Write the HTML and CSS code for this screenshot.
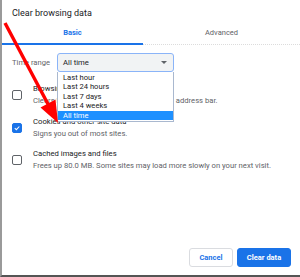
FILE: index.html
```html
<!DOCTYPE html>
<html>
<head>
<meta charset="utf-8">
<link rel="stylesheet" href="styles.css">
</head>
<body>
<div class="dialog">
  <div class="title">Clear browsing data</div>
  <div class="tabs">
    <div class="tab tab-active">Basic</div>
    <div class="tab">Advanced</div>
  </div>
  <div class="content">
    <div class="range-row">
      <span class="range-label">Time range</span>
      <div class="select">
        <span>All time</span>
        <span class="caret"></span>
      </div>
    </div>
    <div class="option">
      <span class="checkbox"></span>
      <div class="option-text">
        <div class="option-title">Browsing history</div>
        <div class="option-sub">Clears history and autocompletions in the address bar.</div>
      </div>
    </div>
    <div class="option">
      <span class="checkbox checked">
        <svg viewBox="0 0 10 10" width="10" height="10"><path d="M2.2 5.2 L4.2 7.1 L7.9 3.1" fill="none" stroke="#fff" stroke-width="1.3"/></svg>
      </span>
      <div class="option-text">
        <div class="option-title">Cookies and other site data</div>
        <div class="option-sub">Signs you out of most sites.</div>
      </div>
    </div>
    <div class="option">
      <span class="checkbox"></span>
      <div class="option-text">
        <div class="option-title">Cached images and files</div>
        <div class="option-sub">Frees up 80.0 MB. Some sites may load more slowly on your next visit.</div>
      </div>
    </div>
  </div>
  <div class="footer">
    <button class="btn btn-cancel">Cancel</button>
    <button class="btn btn-primary">Clear data</button>
  </div>

  <ul class="dropdown">
    <li>Last hour</li>
    <li>Last 24 hours</li>
    <li>Last 7 days</li>
    <li>Last 4 weeks</li>
    <li class="selected">All time</li>
  </ul>

  <svg class="arrow" width="300" height="277" viewBox="0 0 300 277">
    <line x1="5" y1="23" x2="49" y2="106" stroke="#f00" stroke-width="3.4"/>
    <polygon points="58,123 55.5,99.5 40.5,107.5" fill="#f00"/>
  </svg>
</div>
</body>
</html>
```

FILE: styles.css
```css
* { box-sizing: border-box; }
html, body { margin: 0; padding: 0; background: #fff; }
body {
  font-family: Roboto, "Liberation Sans", sans-serif;
  color: #202124;
}
.dialog {
  position: relative;
  width: 300px;
  height: 277px;
  border-left: 2px solid #9a9a9a;
  border-bottom: 2px solid #555;
  display: flex;
  flex-direction: column;
  overflow: hidden;
}
.title {
  font-size: 9px;
  line-height: 11px;
  padding: 8px 0 0 10px;
  height: 22px;
}
.tabs {
  display: flex;
  height: 23px;
}
.tab {
  font-size: 7.5px;
  line-height: 10px;
  text-align: center;
  color: #5f6368;
  padding-top: 6px;
  flex: 1;
  border-bottom: 1px dotted #dcdcdc;
  height: 23px;
}
.tab-active {
  flex: 0 0 141px;
  color: #1a73e8;
  font-weight: bold;
  border-bottom: 2px solid #1a73e8;
}
.content {
  padding: 8px 0 0 10px;
}
.range-row {
  display: flex;
  align-items: center;
  height: 19px;
}
.range-label {
  font-size: 7.6px;
  color: #5f6368;
  width: 45px;
}
.select {
  width: 117px;
  height: 19px;
  background: #f1f3f4;
  border: 1px solid #8ab4f8;
  border-radius: 3px;
  display: flex;
  align-items: center;
  justify-content: space-between;
  padding: 0 6px 0 5px;
  font-size: 7.7px;
  color: #202124;
}
.caret {
  width: 0;
  height: 0;
  border-left: 3px solid transparent;
  border-right: 3px solid transparent;
  border-top: 3px solid #5f6368;
}
.option {
  display: flex;
  align-items: center;
  margin-top: 11px;
  height: 24px;
}
.option + .option { margin-top: 8.5px; }
.checkbox {
  width: 10px;
  height: 10px;
  border: 1.6px solid #5f6368;
  border-radius: 2px;
  margin-right: 11px;
  flex: none;
  display: flex;
  align-items: center;
  justify-content: center;
}
.checkbox.checked {
  background: #1a73e8;
  border-color: #1a73e8;
}
.checkbox svg { display: block; }
.option-text { white-space: nowrap; }
.option-title {
  font-size: 7.7px;
  line-height: 12px;
  color: #202124;
}
.option-sub {
  font-size: 7.65px;
  line-height: 12px;
  color: #5f6368;
}
.footer {
  margin-top: auto;
  display: flex;
  justify-content: flex-end;
  gap: 4px;
  padding: 0 9px 8px 0;
}
.btn {
  font-family: Roboto, "Liberation Sans", sans-serif;
  font-size: 7.5px;
  font-weight: bold;
  height: 19px;
  border-radius: 3px;
  padding: 0;
  cursor: pointer;
}
.btn-cancel {
  width: 44px;
  background: #fff;
  color: #1a73e8;
  border: 1px solid #dadce0;
}
.btn-primary {
  width: 54px;
  background: #1a73e8;
  color: #fff;
  border: 1px solid #1a73e8;
}
.dropdown {
  position: absolute;
  left: 55px;
  top: 72px;
  width: 117px;
  margin: 0;
  padding: 0.5px 0 1px;
  list-style: none;
  background: #fff;
  border: 1px solid #a9b8cf;
  border-top: none;
  font-size: 7.6px;
}
.dropdown li {
  height: 9.6px;
  line-height: 9.6px;
  padding-left: 5px;
  color: #202124;
}
.dropdown li.selected {
  background: #1e90ff;
  color: #fff;
}
.arrow {
  position: absolute;
  left: -2px;
  top: 0;
  pointer-events: none;
}
```
